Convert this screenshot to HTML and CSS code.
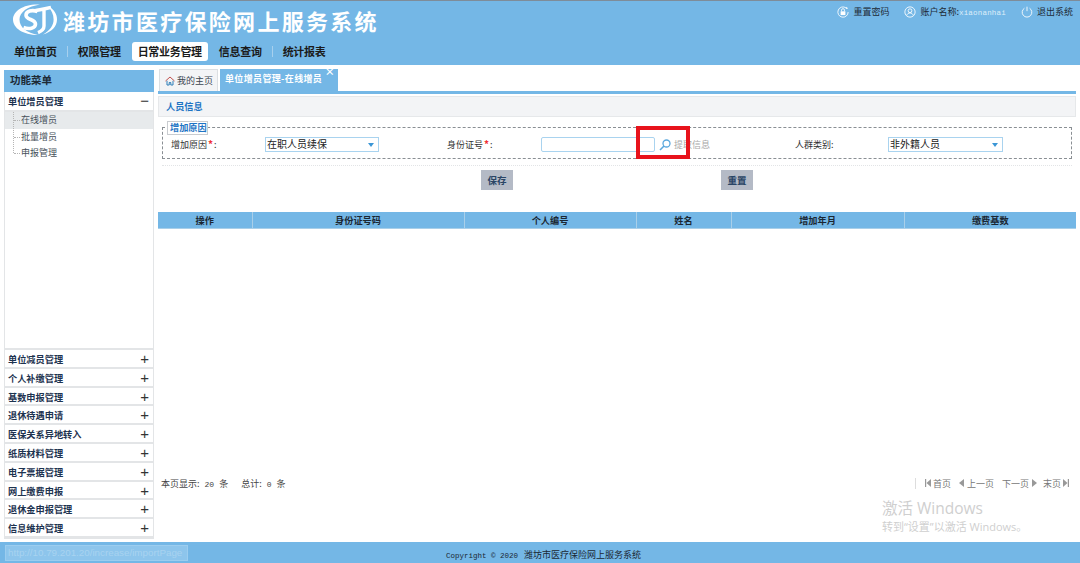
FILE: index.html
```html
<!DOCTYPE html>
<html lang="zh-CN">
<head>
<meta charset="utf-8">
<title>潍坊市医疗保险网上服务系统</title>
<link rel="stylesheet" href="styles.css">
</head>
<body>
<div class="page">
  <header class="header">
    <div class="brand-row">
      <div class="brand">
        <svg class="logo" viewBox="0 0 44 31" aria-hidden="true">
          <path d="M27 .6C11 -.4 0 7 0 15.5 0 24 10 31 25 31 14 29 6.5 23.5 6.5 15.5 6.5 8 15 2.5 27 .6Z" fill="#fff"/>
          <path d="M35 2.5C41 5 44 10 44 15.5 44 22.5 38.5 28 30 30.5 37 26.5 40.6 21.5 40.6 15.5 40.6 10.5 38.5 6 35 2.5Z" fill="#fff"/>
          <path d="M24.5 7.5C19 5.6 13 7 13 11.2 13 15.8 22.5 15.2 22.5 20 22.5 24.5 16 25.5 10.5 23.5" fill="none" stroke="#fff" stroke-width="3.6"/>
          <path d="M22 6.6C27 5.6 32 5 38 3.4M31 6V22C31 25 29 27 25 28.6" fill="none" stroke="#fff" stroke-width="3.4"/>
        </svg>
        <span class="brand-title">潍坊市医疗保险网上服务系统</span>
      </div>
      <div class="tools">
        <span class="tool">
          <svg class="tool-icon" viewBox="0 0 14 14" aria-hidden="true"><path d="M10.5 2.2A6 6 0 1 0 13 7" fill="none" stroke="#fff"/><path d="M11 0.8 L13 2.8 L10.3 3.6 Z" fill="#fff"/><rect x="4.2" y="6.2" width="5.6" height="4.4" fill="#fff"/><path d="M5.3 6.2V4.8a1.7 1.7 0 0 1 3.4 0V6.2" fill="none" stroke="#fff"/></svg>
          重置密码
        </span>
        <span class="tool">
          <svg class="tool-icon" viewBox="0 0 14 14" aria-hidden="true"><circle cx="7" cy="7" r="6" fill="none" stroke="#fff"/><circle cx="7" cy="5.5" r="2.2" fill="none" stroke="#fff"/><path d="M3.2 11c.6-2 2-2.9 3.8-2.9s3.2.9 3.8 2.9" fill="none" stroke="#fff"/></svg>
          <span>账户名称:<span class="account">xiaonanhai</span></span>
        </span>
        <span class="tool">
          <svg class="tool-icon" viewBox="0 0 14 14" aria-hidden="true"><path d="M4 2.6a5.6 5.6 0 1 0 6 0" fill="none" stroke="#fff"/><path d="M7 .8V6" stroke="#fff"/></svg>
          退出系统
        </span>
      </div>
    </div>
    <nav class="nav">
      <a class="nav-item">单位首页</a><i class="nav-sep"></i>
      <a class="nav-item">权限管理</a>
      <a class="nav-item nav-active">日常业务管理</a>
      <a class="nav-item">信息查询</a><i class="nav-sep"></i>
      <a class="nav-item">统计报表</a>
    </nav>
  </header>

  <div class="body-row">
    <aside class="sidebar">
      <div class="side-title">功能菜单</div>
      <div class="side-group side-open">单位增员管理<span class="sign">−</span></div>
      <ul class="sub">
        <li class="sub-item sub-active">在线增员</li>
        <li class="sub-item">批量增员</li>
        <li class="sub-item">申报管理</li>
      </ul>
      <div class="side-fill"></div>
      <div class="side-group">单位减员管理<span class="sign">+</span></div>
      <div class="side-group">个人补缴管理<span class="sign">+</span></div>
      <div class="side-group">基数申报管理<span class="sign">+</span></div>
      <div class="side-group">退休待遇申请<span class="sign">+</span></div>
      <div class="side-group">医保关系异地转入<span class="sign">+</span></div>
      <div class="side-group">纸质材料管理<span class="sign">+</span></div>
      <div class="side-group">电子票据管理<span class="sign">+</span></div>
      <div class="side-group">网上缴费申报<span class="sign">+</span></div>
      <div class="side-group">退休金申报管理<span class="sign">+</span></div>
      <div class="side-group">信息维护管理<span class="sign">+</span></div>
    </aside>

    <main class="main">
      <div class="tabs">
        <div class="tab tab-home">
          <svg class="home-icon" viewBox="0 0 10 10" aria-hidden="true"><path d="M.5 5 5 1l4.5 4" fill="none" stroke="#c0504d"/><path d="M2 4.8V9h2.2V6.5h1.6V9H8V4.8" fill="none" stroke="#2f7fb8"/></svg>
          我的主页
        </div>
        <div class="tab tab-current">单位增员管理-在线增员<span class="tab-close">×</span></div>
      </div>
      <div class="panel-title">人员信息</div>
      <section class="fieldset">
        <div class="legend">增加原因</div>
        <div class="form-grid">
          <span class="label">增加原因<b class="req">*</b>:</span>
          <div class="select">在职人员续保<i class="caret"></i></div>
          <span class="label">身份证号<b class="req">*</b>:</span>
          <div class="id-cell">
            <div class="input"></div>
            <svg class="search-icon" viewBox="0 0 12 12" aria-hidden="true"><circle cx="7.5" cy="4.5" r="3.5" fill="none" stroke="#5ba8dd" stroke-width="1.3"/><path d="M5 7 1 11" stroke="#5ba8dd" stroke-width="1.6"/></svg>
            <span class="fetch">提取信息</span>
          </div>
          <span class="label">人群类别:</span>
          <div class="select select-wide">非外籍人员<i class="caret"></i></div>
        </div>
      </section>
      <div class="actions">
        <button class="btn" type="button">保存</button>
        <button class="btn" type="button">重置</button>
      </div>
      <table class="grid">
        <colgroup>
          <col class="c1"><col class="c2"><col class="c3"><col class="c4"><col class="c5"><col class="c6">
        </colgroup>
        <thead>
          <tr><th>操作</th><th>身份证号码</th><th>个人编号</th><th>姓名</th><th>增加年月</th><th>缴费基数</th></tr>
        </thead>
      </table>
      <div class="grid-space"></div>
      <div class="pager">
        <span class="pager-info">本页显示: <span class="mono">20</span> 条<span class="pager-gap"></span>总计: <span class="mono">0</span> 条</span>
        <span class="pager-links">
          <i class="pager-sep"></i>
          <span class="pl"><svg class="pg-icon" viewBox="0 0 6 8" aria-hidden="true"><path d="M0 0h1.2v8H0zM6 0v8L1.5 4z" fill="#999"/></svg>首页</span>
          <span class="pl"><svg class="pg-icon" viewBox="0 0 6 8" aria-hidden="true"><path d="M5 0v8L0 4z" fill="#999"/></svg>上一页</span>
          <span class="pl">下一页<svg class="pg-icon" viewBox="0 0 6 8" aria-hidden="true"><path d="M1 0v8l5-4z" fill="#999"/></svg></span>
          <span class="pl pl-last">末页<svg class="pg-icon" viewBox="0 0 6 8" aria-hidden="true"><path d="M0 0v8l4.5-4zM4.8 0H6v8H4.8z" fill="#999"/></svg></span>
        </span>
      </div>
    </main>
  </div>

  <footer class="footer"><span class="mono-foot">Copyright © 2020</span> 潍坊市医疗保险网上服务系统</footer>

  <div class="url-tip">http://10.79.201.20/increase/importPage</div>
  <div class="marker"></div>
  <div class="watermark">
    <div class="wm-big">激活 Windows</div>
    <div class="wm-small">转到“设置”以激活 Windows。</div>
  </div>
</div>
</body>
</html>
```

FILE: styles.css
```css
* { box-sizing: border-box; }
html, body { margin: 0; padding: 0; }
body {
  width: 1080px;
  height: 563px;
  overflow: hidden;
  background: #fff;
  font-family: "Noto Sans CJK SC", "Liberation Sans", sans-serif;
  font-size: 9px;
  color: #333;
}
.page { position: relative; width: 1080px; height: 563px; display: flex; flex-direction: column; }

.header { height: 65px; background: #74b7e6; border-top: 1px solid #7e8c99; display: flex; flex-direction: column; }
.brand-row { display: flex; justify-content: space-between; height: 40px; }
.brand { display: flex; align-items: center; padding-left: 13px; height: 37px; }
.logo { width: 44px; height: 31px; margin-right: 6px; }
.brand-title { font-size: 22px; font-weight: 700; color: #fff; letter-spacing: 2.3px; line-height: 30px; white-space: nowrap; }
.tools { display: flex; gap: 15px; padding: 3px 7px 0 0; height: 20px; color: #1d2a36; font-size: 9px; line-height: 16px; }
.tool { display: flex; align-items: center; gap: 4px; height: 16px; white-space: nowrap; }
.tool-icon { width: 12px; height: 12px; }
.account { font-family: "Liberation Mono", monospace; font-size: 7.5px; color: #dcedf9; letter-spacing: .2px; }

.nav { display: flex; align-items: center; padding-left: 14px; height: 20px; }
.nav-item { font-size: 11px; font-weight: 700; color: #1b1b1b; line-height: 19px; height: 19px; border-radius: 3px; white-space: nowrap; letter-spacing: -.3px; }
.nav-item + .nav-item { margin-left: 11px; }
.nav-active { background: #fff; padding: 0 6px; }
.nav-sep { width: 1px; height: 11px; background: #a7d0ee; margin: 0 10px; }

.body-row { flex: 1; display: flex; min-height: 0; }
.sidebar { width: 150px; margin: 5px 0 3px 4px; border: 1px solid #e3e5e7; border-top: 0; display: flex; flex-direction: column; }
.side-title { height: 22px; flex: none; background: #74b7e6; font-size: 10.5px; font-weight: 700; line-height: 20px; padding-left: 6px; color: #1d2a36; margin: 0 -1px; }
.side-group { height: 18.8px; flex: none; position: relative; font-size: 9.2px; font-weight: 700; line-height: 18px; padding-left: 3px; color: #1d3350; border-bottom: 2px solid #e3e5e7; white-space: nowrap; }
.side-open { height: 20px; }
.sign { position: absolute; right: 4px; top: 0; font-size: 15px; font-weight: 400; line-height: 18px; color: #333; font-family: "Liberation Sans", sans-serif; }
.sub { position: relative; list-style: none; margin: 0; padding: 0; }
.sub::before { content: ""; position: absolute; left: 8px; top: 0; height: 41px; border-left: 1px dotted #b5b5b5; z-index: 1; }
.sub-item { position: relative; height: 16.5px; padding-left: 16px; font-size: 9px; line-height: 15px; color: #46505a; }
.sub-item::before { content: ""; position: absolute; left: 9px; top: 8px; width: 6px; border-top: 1px dotted #b5b5b5; }
.sub-active { background: #e7eaec; }
.side-fill { flex: 1; border-bottom: 2px solid #e3e5e7; }

.main { flex: 1; min-width: 0; padding: 4px 4px 0 4px; display: flex; flex-direction: column; }
.tabs { display: flex; gap: 2px; height: 25px; padding-left: 1px; border-bottom: 3px solid #74b7e6; flex: none; }
.tab { height: 22px; font-size: 9px; line-height: 20px; white-space: nowrap; }
.tab-home { display: flex; align-items: center; gap: 2px; width: 59px; padding-left: 5px; background: #f3f4f6; border: 1px solid #dcdfe2; border-bottom: 0; color: #3c4650; }
.home-icon { width: 10px; height: 10px; }
.tab-current { position: relative; width: 118px; padding-left: 5px; background: #74b7e6; color: #fff; font-weight: 700; letter-spacing: .35px; }
.tab-close { position: absolute; right: 3px; top: -3px; color: #fff; font-size: 10px; font-weight: 700; line-height: 12px; }

.panel-title { height: 21px; margin-top: 2px; background: #f3f4f6; border: 1px solid #e6e8ea; font-size: 9.2px; font-weight: 700; color: #1e74c4; line-height: 18px; padding-left: 7px; flex: none; }

.fieldset { position: relative; height: 32px; margin: 10px 4px 0 4px; border: 1px dashed #8a8f94; flex: none; }
.legend { position: absolute; left: 4px; top: -7px; width: 41px; height: 14px; background: #fff; border: 1px solid #c9ccd0; color: #1e74c4; font-size: 9.2px; font-weight: 700; line-height: 11px; padding-left: 2px; white-space: nowrap; }
.form-grid { display: grid; grid-template-columns: 94px 182px 94px 254px 93px 115px; align-items: center; padding: 9px 0 0 8px; }
.label { font-size: 9px; line-height: 14px; color: #333; white-space: nowrap; }
.req { color: #ef2f35; font-weight: 700; font-size: 10px; margin: 0 1px; }
.select { position: relative; width: 114px; height: 15px; border: 1px solid #a9d3ef; font-size: 10px; line-height: 12px; padding-left: 1px; color: #222; }
.select-wide { width: 115px; }
.caret { position: absolute; right: 4px; top: 5px; width: 0; height: 0; border-left: 3.5px solid transparent; border-right: 3.5px solid transparent; border-top: 4px solid #3b96d6; }
.id-cell { display: flex; align-items: center; }
.input { width: 114px; height: 15px; border: 1px solid #a9d3ef; border-radius: 2px; background: #fff; }
.search-icon { width: 12px; height: 12px; margin-left: 4px; }
.fetch { margin-left: 3px; font-size: 9px; line-height: 13px; color: #a8a8a8; }

.actions { display: flex; gap: 208px; margin: 11px 0 0 0; padding: 0 0 0 323px; position: relative; height: 20px; flex: none; }
.actions::before { content: ""; position: absolute; left: 4px; right: 4px; top: -5px; border-top: 1px dotted #e2e4e6; }
.btn { width: 32px; height: 20px; padding: 0; border: 0; background: #b4bac6; color: #2a4565; font-family: inherit; font-size: 9.5px; font-weight: 700; line-height: 18px; }

.grid { width: 918px; margin-top: 22px; border-collapse: collapse; table-layout: fixed; flex: none; }
.c1 { width: 94px; } .c2 { width: 212px; } .c3 { width: 172px; } .c4 { width: 95px; } .c5 { width: 173px; } .c6 { width: 172px; }
.grid th { height: 16px; padding: 0; background: #74b7e6; border-right: 1px solid #a9cfe9; border-bottom: 1px solid #a9cfe9; font-size: 9.2px; font-weight: 700; line-height: 14px; color: #1b2733; }
.grid th:last-child { border-right: 0; }
.grid-space { flex: 1; }

.pager { display: flex; justify-content: space-between; align-items: center; height: 14px; padding: 0 7px 0 3px; margin-bottom: 52px; flex: none; font-size: 9px; color: #444; }
.mono { font-family: "Liberation Mono", monospace; font-size: 8px; margin: 0 3px; }
.pager-gap { display: inline-block; width: 13px; }
.pager-links { display: flex; align-items: center; gap: 8px; color: #777; }
.pager-sep { width: 1px; height: 11px; background: #ddd; margin-right: 1px; }
.pl { display: inline-flex; align-items: center; gap: 2px; }
.pl-last { margin-left: -2px; }
.pg-icon { width: 6px; height: 8px; }

.footer { height: 21px; flex: none; background: #74b7e6; text-align: center; font-size: 9px; line-height: 25px; color: #1b2733; padding-left: 7px; }
.mono-foot { font-family: "Liberation Mono", monospace; font-size: 7.5px; margin-right: 4px; }

.url-tip { position: absolute; left: 5px; top: 545px; width: 183px; height: 16px; background: #8dc5ec; border: 1px solid #9ccdef; font-family: "Liberation Sans", sans-serif; font-size: 9.8px; line-height: 14px; color: #a8d3f0; padding-left: 2px; white-space: nowrap; }
.marker { position: absolute; left: 636px; top: 126px; width: 54px; height: 33px; border: 4px solid #e8131c; }
.watermark { position: absolute; left: 882px; top: 498px; color: #cfcfcf; font-family: "Open Sans", "Noto Sans CJK SC", sans-serif; }
.wm-big { font-size: 15.5px; line-height: 20px; white-space: nowrap; }
.wm-small { font-size: 11px; line-height: 15px; margin-top: 1px; white-space: nowrap; }
```
